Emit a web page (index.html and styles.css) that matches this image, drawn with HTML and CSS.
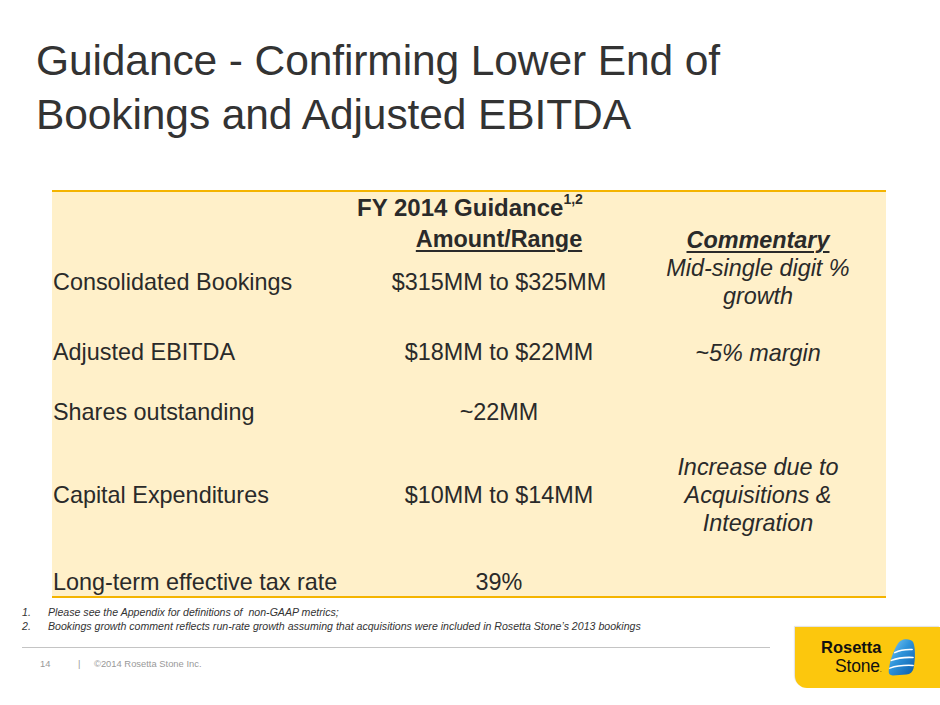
FILE: index.html
```html
<!DOCTYPE html>
<html>
<head>
<meta charset="utf-8">
<link rel="stylesheet" href="styles.css">
</head>
<body>
<div class="slide">
  <h1 class="title">Guidance - Confirming Lower End of<br>Bookings and Adjusted EBITDA</h1>

  <div class="table">
    <div class="row row-head">
      <div class="cell-span">FY 2014 Guidance<sup>1,2</sup></div>
    </div>
    <div class="row row-sub">
      <div class="c1"></div>
      <div class="c2"><span class="ul">Amount/Range</span></div>
      <div class="c3 head-comm"><span class="ul">Commentary</span></div>
    </div>
    <div class="row r1">
      <div class="c1">Consolidated Bookings</div>
      <div class="c2">$315MM to $325MM</div>
      <div class="c3 comm">Mid-single digit %<br>growth</div>
    </div>
    <div class="row r2">
      <div class="c1">Adjusted EBITDA</div>
      <div class="c2">$18MM to $22MM</div>
      <div class="c3 comm lower">~5% margin</div>
    </div>
    <div class="row r3">
      <div class="c1">Shares outstanding</div>
      <div class="c2">~22MM</div>
      <div class="c3"></div>
    </div>
    <div class="row r4">
      <div class="c1">Capital Expenditures</div>
      <div class="c2">$10MM to $14MM</div>
      <div class="c3 comm">Increase due to<br>Acquisitions &amp;<br>Integration</div>
    </div>
    <div class="row r5">
      <div class="c1">Long-term effective tax rate</div>
      <div class="c2">39%</div>
      <div class="c3"></div>
    </div>
  </div>

  <ol class="notes">
    <li><span class="num">1.</span><span>Please see the Appendix for definitions of&nbsp; non-GAAP metrics;</span></li>
    <li><span class="num">2.</span><span>Bookings growth comment reflects run-rate growth assuming that acquisitions were included in Rosetta Stone’s 2013 bookings</span></li>
  </ol>

  <div class="footer">
    <div class="foot-left">
      <div class="foot-rule"></div>
      <div class="foot-text"><span class="page">14</span><span class="sep">|</span><span>©2014 Rosetta Stone Inc.</span></div>
    </div>
    <div class="logo">
      <div class="logo-words">
        <span class="lw-top">Rosetta</span>
        <span class="lw-bot">Stone<span class="reg">.</span></span>
      </div>
      <svg class="stone" width="29" height="41" viewBox="0 0 30 40">
        <defs>
          <linearGradient id="sg" x1="0" y1="0" x2="1" y2="1">
            <stop offset="0" stop-color="#86d0f5"/>
            <stop offset="0.45" stop-color="#2e93da"/>
            <stop offset="1" stop-color="#0b5aa8"/>
          </linearGradient>
        </defs>
        <path d="M17 1.5 C21 0.5 25 1.5 27 4 C29.5 9 29.5 22 27.5 31 C26.5 35 24 37 20 37.5 L6 38.5 C3 38.5 1.5 37 1.8 34 C2.5 25 6 14 11 6 C12.8 3.5 14.5 2.2 17 1.5 Z" fill="url(#sg)"/>
        <path d="M8 15 C13 12.5 19 11.5 26 11.8" stroke="#fff" stroke-width="1.6" fill="none" stroke-linecap="round"/>
        <path d="M4.5 23 C11 20.5 18 19.5 27 20" stroke="#fff" stroke-width="1.6" fill="none" stroke-linecap="round"/>
        <path d="M3 31 C10 28.5 18 27.8 27 28.2" stroke="#fff" stroke-width="1.6" fill="none" stroke-linecap="round"/>
      </svg>
    </div>
  </div>
</div>
</body>
</html>
```

FILE: styles.css
```css
* { box-sizing: border-box; }
html, body { margin: 0; padding: 0; background: #fff; }
body { font-family: "Liberation Sans", Arial, Helvetica, sans-serif; color: #2e2e2e; }

.slide {
  width: 940px;
  height: 705px;
  overflow: hidden;
  display: flex;
  flex-direction: column;
}

.title {
  margin: 0;
  padding: 34px 0 0 36px;
  font-weight: normal;
  font-size: 42.5px;
  line-height: 54px;
  color: #333;
  letter-spacing: -0.1px;
}

.table {
  margin: 48px 0 0 52px;
  width: 834px;
  background: #fff0c9;
  border-top: 2px solid #f4b400;
  border-bottom: 2px solid #f4b400;
  font-size: 23.4px;
  line-height: 28px;
  color: #2a2a2a;
}

.row {
  display: grid;
  grid-template-columns: 316px 262px 256px;
  align-items: center;
}
.row-head {
  display: flex;
  justify-content: center;
  height: 32px;
  align-items: center;
  font-weight: bold;
  font-size: 24px;
  padding-left: 2px;
}
.row-head sup { font-size: 14px; line-height: 0; position: relative; top: -3px; }
.row-sub { height: 30px; font-weight: bold; }
.r1 { height: 52px; }
.r2 { height: 92px; }
.r3 { height: 24px; }
.r4 { height: 146px; }
.r5 { height: 28px; }

.c1 { padding-left: 1px; }
.c2 { text-align: center; }
.c3 { text-align: center; }
.ul { text-decoration: underline; text-decoration-thickness: 2px; text-underline-offset: 3px; }
.head-comm { font-style: italic; position: relative; top: 1px; }
.comm { font-style: italic; }
.lower { position: relative; top: 1px; }

.notes {
  list-style: none;
  margin: 7px 0 0 22px;
  padding: 0;
  font-size: 10.6px;
  line-height: 14px;
  font-style: italic;
  color: #333;
}
.notes li { display: flex; }
.notes .num { width: 26px; }

.footer {
  display: flex;
  align-items: flex-start;
  margin-top: -6px;
}
.foot-left {
  margin-left: 22px;
  width: 748px;
  padding-top: 20px;
}
.foot-rule { height: 1px; background: #c4c4c4; }
.foot-text {
  margin-top: 10px;
  padding-left: 18px;
  font-size: 9.4px;
  line-height: 11px;
  color: #999;
  display: flex;
}
.page { width: 38px; }
.sep { width: 16px; }

.logo {
  margin-left: auto;
  width: 145px;
  height: 61px;
  background: #fcc70d;
  border-bottom-left-radius: 12px;
  box-shadow: -1px -1px 1px #e2e2e2;
  display: flex;
  align-items: center;
  padding-left: 26px;
  gap: 5px;
}
.logo-words {
  display: flex;
  flex-direction: column;
  align-items: flex-end;
  color: #111;
  margin-top: 1px;
}
.lw-top { display: block; font-size: 16.5px; line-height: 19px; font-weight: bold; letter-spacing: 0; }
.lw-bot { display: block; font-size: 17.5px; line-height: 19px; letter-spacing: -0.2px; }
.reg { font-size: 7px; }
```
